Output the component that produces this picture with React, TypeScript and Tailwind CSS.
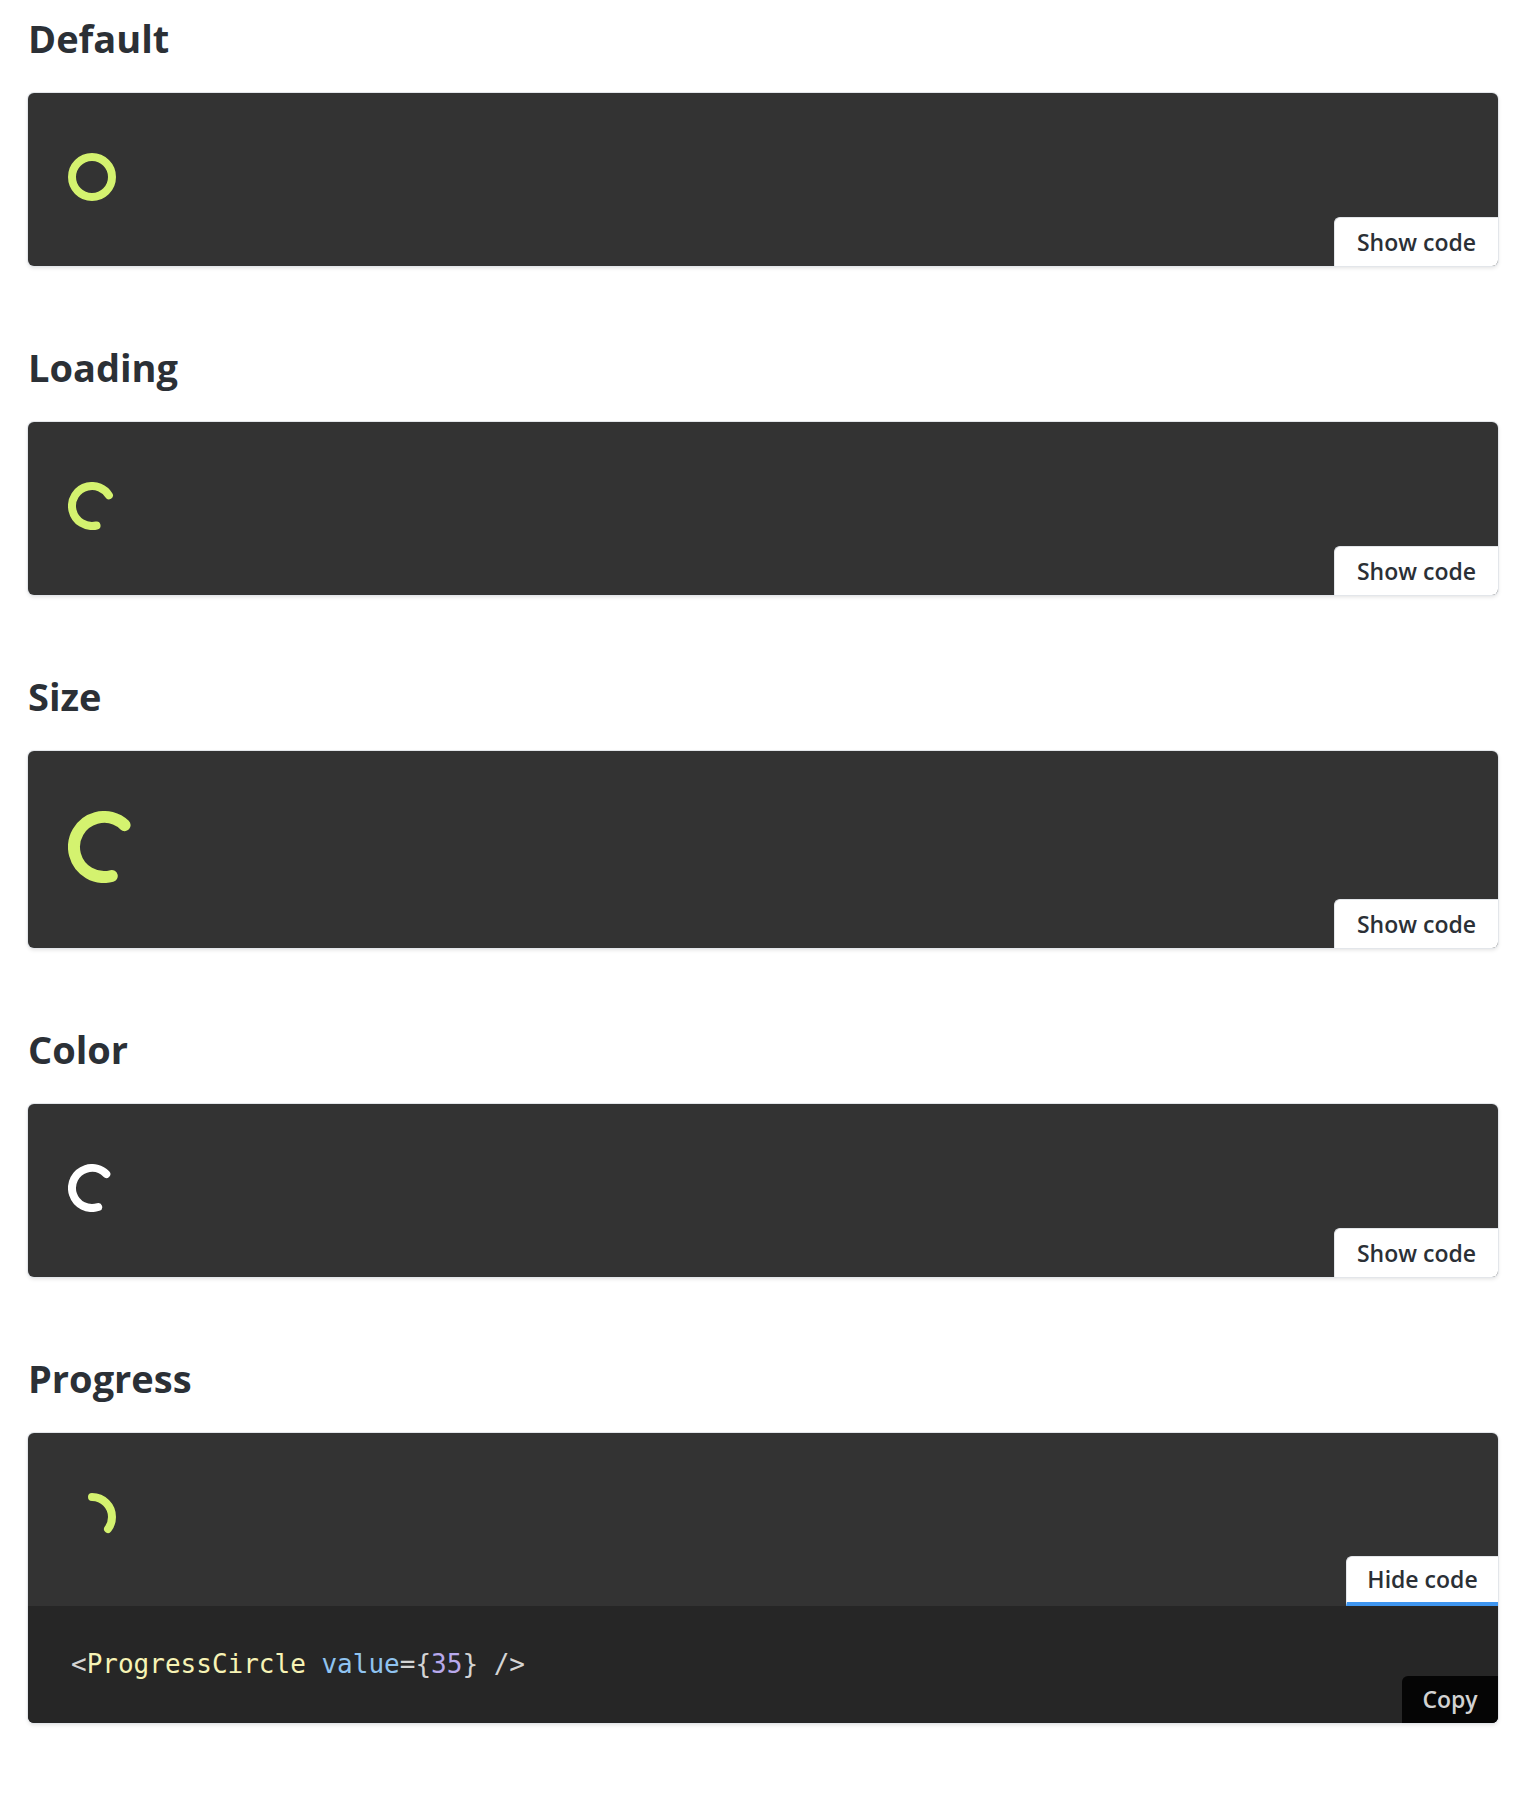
import React from "react";

const LIME = "#d4f26f";

type SpinnerProps = {
  size?: number;
  color?: string;
  dash?: number;
  rotate?: number;
};

function Spinner({ size = 48, color = LIME, dash, rotate = 0 }: SpinnerProps) {
  const circumference = 2 * Math.PI * 20;
  return (
    <svg width={size} height={size} viewBox="0 0 48 48">
      <circle
        cx="24"
        cy="24"
        r="20"
        fill="none"
        stroke={color}
        strokeWidth="8"
        strokeLinecap="round"
        strokeDasharray={dash ? `${dash} ${circumference}` : undefined}
        transform={`rotate(${rotate} 24 24)`}
      />
    </svg>
  );
}

function Section({
  title,
  children,
  open,
  first,
}: {
  title: string;
  children: React.ReactNode;
  open?: boolean;
  first?: boolean;
}) {
  return (
    <section className={first ? "pt-[14px]" : "pt-[77px]"}>
      <h2 className="text-[38px] leading-[48px] font-bold text-[#2b3036] mb-[31px] font-['Open_Sans',sans-serif]">
        {title}
      </h2>
      <div className="rounded-md bg-[#333333] shadow-[0_0_0_1px_#e3e6ea,0_2px_4px_rgba(0,0,0,0.12)] overflow-hidden">
        <div className="relative flex items-center pl-10 pt-[60px] pb-[65px]">
          {children}
          {open ? (
            <button className="absolute bottom-0 right-0 w-[152px] h-[50px] bg-white rounded-tl-md border-l border-t border-[#e3e6ea] border-b-4 border-b-[#3f96f0] text-[23px] font-semibold text-[#2b3036] font-['Open_Sans',sans-serif]">
              Hide code
            </button>
          ) : (
            <button className="absolute bottom-0 right-0 w-[164px] h-[49px] bg-white rounded-tl-md border-l border-t border-[#e3e6ea] text-[23px] font-semibold text-[#2b3036] font-['Open_Sans',sans-serif]">
              Show code
            </button>
          )}
        </div>
        {open && (
          <div className="relative bg-[#262626] h-[117px] flex items-center pl-[43px]">
            <pre className="font-['DejaVu_Sans_Mono',monospace] text-[26px] text-[#d4d4d4]">
              &lt;<span className="text-[#f7f3b5]">ProgressCircle</span>{" "}
              <span className="text-[#8fc3f0]">value</span>={"{"}
              <span className="text-[#b8a9ec]">35</span>
              {"}"} /&gt;
            </pre>
            <button className="absolute bottom-0 right-0 w-[96px] h-[47px] bg-[#050505] rounded-tl-md text-[23px] font-semibold text-[#d2d2d2] font-['Open_Sans',sans-serif]">
              Copy
            </button>
          </div>
        )}
      </div>
    </section>
  );
}

export default function App() {
  const c = 2 * Math.PI * 20;
  return (
    <div className="min-h-screen bg-white pl-[28px] pr-[26px] pb-[80px]">
      <Section title="Default" first>
        <Spinner />
      </Section>
      <Section title="Loading">
        <Spinner dash={(249 / 360) * c} rotate={77} />
      </Section>
      <Section title="Size">
        <Spinner size={72} dash={(238 / 360) * c} rotate={75} />
      </Section>
      <Section title="Color">
        <Spinner color="#ffffff" dash={(242 / 360) * c} rotate={72} />
      </Section>
      <Section title="Progress" open>
        <Spinner dash={0.35 * c} rotate={-90} />
      </Section>
    </div>
  );
}
